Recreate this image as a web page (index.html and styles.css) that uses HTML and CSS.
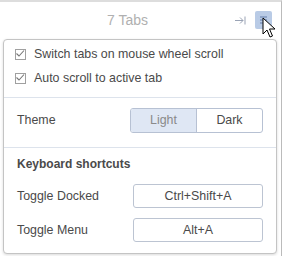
FILE: index.html
```html
<!DOCTYPE html>
<html lang="en">
<head>
  <meta charset="UTF-8">
  <title>Tabs</title>
  <link rel="stylesheet" href="styles.css">
</head>
<body>
  <div class="window">
    <div class="topbar">
      <span class="count">7 Tabs</span>
      <svg class="dock" width="11" height="9" viewBox="0 0 11 9"><path d="M0 4.5h8M5 1.5l3 3-3 3M10 0.5v8" fill="none" stroke="#9aa3b5" stroke-width="1"/></svg>
      <span class="menu-btn">
        <svg width="9" height="10" viewBox="0 0 9 10"><path d="M1 2h7M1 5h7M1 8h7" stroke="#7f97bd" stroke-width="1.4"/></svg>
      </span>
    </div>
    <div class="popup">
      <label class="check"><span class="box"><svg width="10" height="9" viewBox="0 0 10 9"><path d="M1.5 4.5l2.5 2.5L9 1.5" fill="none" stroke="#777" stroke-width="1.1"/></svg></span>Switch tabs on mouse wheel scroll</label>
      <label class="check"><span class="box"><svg width="10" height="9" viewBox="0 0 10 9"><path d="M1.5 4.5l2.5 2.5L9 1.5" fill="none" stroke="#777" stroke-width="1.1"/></svg></span>Auto scroll to active tab</label>
      <div class="section theme">
        <div class="row">
          <span>Theme</span>
          <div class="seg">
            <span class="seg-item active">Light</span>
            <span class="seg-item">Dark</span>
          </div>
        </div>
      </div>
      <div class="section">
        <div class="heading">Keyboard shortcuts</div>
        <div class="row">
          <span>Toggle Docked</span>
          <span class="key">Ctrl+Shift+A</span>
        </div>
        <div class="row">
          <span>Toggle Menu</span>
          <span class="key">Alt+A</span>
        </div>
      </div>
    </div>
    <div class="below">Chrome Web Store - Tabs - Tab Manager</div>
    <svg class="cursor" width="14" height="22" viewBox="0 0 14 22"><path d="M1 1v16l4-4 3 7 2.5-1-3-7h5.5z" fill="#fff" stroke="#000" stroke-width="1"/></svg>
  </div>
</body>
</html>
```

FILE: styles.css
```css
body {
  margin: 0;
  background: #fff;
  font-family: "Liberation Sans", Arial, sans-serif;
  font-size: 12.4px;
  color: #4a4a4a;
}
.window {
  position: relative;
  width: 282px;
  height: 256px;
  border-right: 1px solid #bbb;
  border-top: 2px solid #ddd;
  overflow: hidden;
  box-sizing: border-box;
}
.topbar {
  height: 36px;
  display: flex;
  align-items: center;
  padding: 0 9px 0 0;
  box-sizing: border-box;
}
.count {
  flex: 1;
  text-align: center;
  padding-left: 20px;
  font-size: 14px;
  color: #b0b0b0;
}
.dock {
  margin-right: 9px;
}
.menu-btn {
  width: 17px;
  height: 18px;
  background: #b9cbe6;
  border-radius: 2px;
  display: flex;
  align-items: center;
  justify-content: center;
}
.popup {
  margin: 1px 0 0 3px;
  width: 274px;
  height: 215px;
  border: 1px solid #c4c4c4;
  border-radius: 4px;
  box-shadow: 0 1px 3px rgba(0, 0, 0, 0.15);
  background: #fff;
  box-sizing: border-box;
  padding-top: 2px;
}
.check {
  display: flex;
  align-items: center;
  height: 24px;
  padding-left: 11px;
}
.box {
  width: 9px;
  height: 9px;
  border: 1px solid #a0a0a0;
  margin-right: 8px;
  position: relative;
}
.box svg {
  position: absolute;
  left: -1px;
  top: -1px;
}
.section {
  border-top: 1px solid #dde3ec;
  padding: 0 13px;
}
.theme {
  margin-top: 7px;
  padding-bottom: 5px;
}
.row {
  display: flex;
  align-items: center;
  justify-content: space-between;
  height: 34px;
}
.theme .row {
  height: 44px;
}
.seg {
  display: flex;
  border: 1px solid #b7c1d3;
  border-radius: 3px;
  overflow: hidden;
}
.seg-item {
  width: 65px;
  height: 23px;
  line-height: 23px;
  text-align: center;
}
.seg-item.active {
  background: #dfe7f4;
  color: #8a8a8a;
  border-right: 1px solid #b7c1d3;
}
.heading {
  font-size: 12px;
  font-weight: bold;
  padding-top: 9px;
  height: 14px;
  margin-bottom: 8px;
}
.key {
  width: 128px;
  height: 22px;
  line-height: 22px;
  border: 1px solid #bcc4d2;
  border-radius: 3px;
  text-align: center;
}
.below {
  color: #000;
  padding-left: 4px;
  margin-top: 0;
}
.cursor {
  position: absolute;
  left: 262px;
  top: 15px;
}
```
